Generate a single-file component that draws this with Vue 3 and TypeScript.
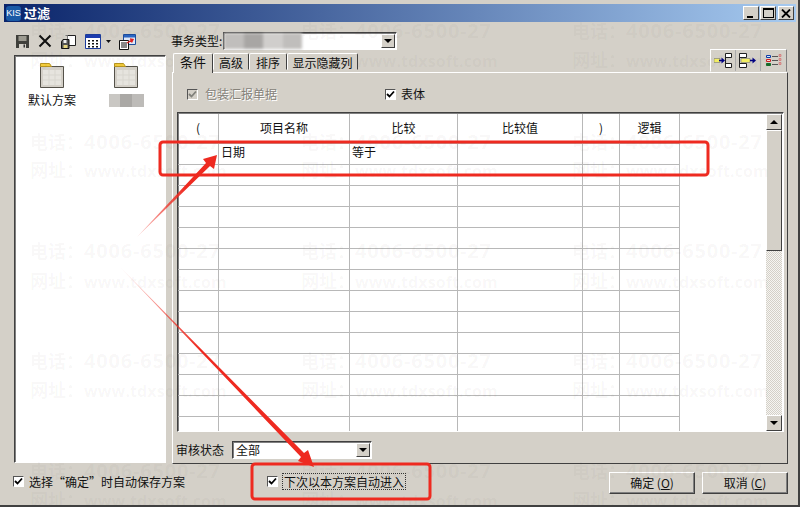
<script setup lang="ts">
const columns: string[] = ['(', '项目名称', '比较', '比较值', ')', '逻辑']
const rows: string[][] = Array.from({ length: 14 }, (_, i) =>
  i === 0 ? ['', '日期', '等于', '', '', ''] : ['', '', '', '', '', ''],
)
const tabs: string[] = ['条件', '高级', '排序', '显示隐藏列']
const marks = [
  { y: 19, l: '电话：', t: '4006-6500-27', url: false },
  { y: 48, l: '网址：', t: 'www.tdxsoft.com', url: true },
  { y: 130, l: '电话：', t: '4006-6500-27', url: false },
  { y: 158, l: '网址：', t: 'www.tdxsoft.com', url: true },
  { y: 239, l: '电话：', t: '4006-6500-27', url: false },
  { y: 269, l: '网址：', t: 'www.tdxsoft.com', url: true },
  { y: 349, l: '电话：', t: '4006-6500-27', url: false },
  { y: 378, l: '网址：', t: 'www.tdxsoft.com', url: true },
  { y: 459, l: '电话：', t: '4006-6500-27', url: false },
  { y: 488, l: '网址：', t: 'www.tdxsoft.com', url: true },
]
const markCols: number[] = [30, 301, 572]
</script>

<template>
  <div class="window">
    <header class="title">
      <span class="kis">KIS</span>
      <span class="title-text">过滤</span>
      <span class="win-btns">
        <button class="win-btn"><i class="g-min"></i></button>
        <button class="win-btn"><i class="g-max"></i></button>
        <button class="win-btn close">
          <svg width="10" height="9" viewBox="0 0 10 9"><path d="M1 0.5 9 8.500M9 0.5 1 8.500" stroke="#000" stroke-width="1.800" /></svg>
        </button>
      </span>
    </header>

    <div class="main">
      <aside class="side">
        <div class="toolbar">
          <svg width="15" height="15" viewBox="0 0 15 15"><path d="M1 1h13v13H1z" fill="#3f3f3a" /><path d="M3.500 2h8v5h-8z" fill="#9c9a90" /><path d="M4 10h7v4H4z" fill="#d4d0c8" /><path d="M8.500 10.500h1.500v3H8.500z" fill="#333" /></svg>
          <svg width="14" height="14" viewBox="0 0 14 14"><path d="M1.500 1.500 12.500 12.500M12.500 1.500 1.500 12.500" stroke="#111" stroke-width="2" /></svg>
          <svg width="17" height="16" viewBox="0 0 17 16"><path d="M7.500 1.500h8v10h-8z" fill="#fff" stroke="#222" /><path d="M5.500 1.500h2v4" fill="none" stroke="#777" /><path d="M3 5.500h6v9H1.500v-7z" fill="#555" stroke="#111" /><path d="M3.500 6h3v3h-3z" fill="#eee" /><path d="M3.500 11h4v3h-4z" fill="#e6d680" /></svg>
          <span class="grid-group">
            <svg width="16" height="15" viewBox="0 0 16 15"><path d="M.5.500h15v14H.5z" fill="#fff" stroke="#1c3c9c" /><path d="M1 1h14v3H1z" fill="#1c3cb0" /><path d="M3 6h2v1.500H3zM7 6h2v1.500H7zM11 6h2v1.500h-2zM3 9h2v1.500H3zM7 9h2v1.500H7zM11 9h2v1.500h-2zM3 12h2v1.500H3zM7 12h2v1.500H7zM11 12h2v1.500h-2z" fill="#111" /></svg>
            <svg width="5" height="3" viewBox="0 0 5 3"><path d="M0 0h5L2.500 3z" fill="#111" /></svg>
          </span>
          <svg width="17" height="16" viewBox="0 0 17 16"><path d="M4.500.500h12v10h-12z" fill="#dfe9f8" stroke="#1c4c9c" /><path d="M5 1h11v2.500H5z" fill="#2a66c4" /><path d="M.5 6.500h9v9h-9z" fill="#fff" stroke="#111" /><path d="M2 9h6M2 11h6M2 13h6" stroke="#111" /><path d="M8 9 13 6M11 5l3 .5L12.500 8.500" stroke="#d22" stroke-width="1.400" fill="none" /></svg>
        </div>
        <div class="list sunken">
          <figure class="scheme">
            <svg class="folder" width="24" height="25" viewBox="0 0 24 25"><path d="M.5 3.500h23v21H.5z" fill="#d4d0c8" stroke="#55524a" /><path d="M.5.500h9l2 3H.5z" fill="#f3cc3a" stroke="#b8951f" /><path d="M3 7h18v15H3z" fill="#e6e4de" /><path d="M3 12h18M3 17h18M9 7v15M15 7v15" stroke="#d8d6cf" /></svg>
            <figcaption>默认方案</figcaption>
          </figure>
          <figure class="scheme">
            <svg class="folder" width="24" height="25" viewBox="0 0 24 25"><path d="M.5 3.500h23v21H.5z" fill="#d4d0c8" stroke="#55524a" /><path d="M.5.500h9l2 3H.5z" fill="#f3cc3a" stroke="#b8951f" /><path d="M3 7h18v15H3z" fill="#e6e4de" /><path d="M3 12h18M3 17h18M9 7v15M15 7v15" stroke="#d8d6cf" /></svg>
            <figcaption class="blurred"><i></i><i></i><i></i></figcaption>
          </figure>
        </div>
      </aside>

      <section class="content">
        <div class="type-row">
          <label class="type-label">事务类型:</label>
          <div class="combo type-combo">
            <span class="smudge"><i></i><i></i><i></i><i></i></span>
            <span class="drop"><b></b></span>
          </div>
        </div>

        <div class="tab-row">
          <div class="tabs">
            <span v-for="(t, i) in tabs" :key="t" class="tab" :class="{ active: i === 0 }">{{ t }}</span>
          </div>
          <div class="tool-group">
            <span class="tool">
              <svg width="18" height="15" viewBox="0 0 18 15"><path d="M0 5.500h6v4H0z" fill="#f2ee62" stroke="#777" stroke-width=".6" /><path d="M5 7.500h4" stroke="#000080" stroke-width="1.500" /><path d="M7.500 4.500 11 7.500 7.500 10.500z" fill="#000080" /><path d="M11.500.5h6v4h-6zM11.500 10.500h6v4h-6zM11.500 4v7" fill="#fff" stroke="#222" /></svg>
            </span>
            <span class="tool">
              <svg width="18" height="15" viewBox="0 0 18 15"><path d="M.5.500h7v4h-7zM.5 10.500h7v4h-7zM.5 4v7" fill="#fff" stroke="#222" /><path d="M2 5.500h9v4H2z" fill="#f2ee62" stroke="#777" stroke-width=".6" /><path d="M11 7.500h3" stroke="#000080" stroke-width="1.500" /><path d="M13.500 4.500 17 7.500 13.500 10.500z" fill="#000080" /></svg>
            </span>
            <span class="tool">
              <svg width="16" height="13" viewBox="0 0 16 13"><path d="M.5 1.500h4v2h-4z" fill="#dfe6f8" stroke="#0b3da8" /><path d="M.5 5.500h4v2h-4z" fill="#f4d8d8" stroke="#c22" /><path d="M.5 9.500h4v2h-4z" fill="#176b2a" stroke="#176b2a" /><path d="M6 2.500h6M6 6.500h6M6 10.500h6" stroke="#555" /><path d="M13 .500h2v2h-2zM13 4.500h2v2h-2zM13 8.500h2v2h-2z" fill="#e4a8a8" stroke="#c66" stroke-width=".6" /></svg>
            </span>
          </div>
        </div>

        <div class="panel">
          <div class="check-row">
            <label class="check disabled"><span class="box"><svg width="9" height="9" viewBox="0 0 9 9"><path d="M1 4l2.500 2.500L8 1.500" stroke="#80807a" stroke-width="1.800" fill="none" /></svg></span>包装汇报单据</label>
            <label class="check"><span class="box white"><svg width="9" height="9" viewBox="0 0 9 9"><path d="M1 4l2.500 2.500L8 1.500" stroke="#000" stroke-width="1.800" fill="none" /></svg></span>表体</label>
          </div>

          <div class="table sunken">
            <div class="grid">
              <div class="head">
                <span v-for="(c, i) in columns" :key="i" class="cell head-cell">{{ c }}</span>
              </div>
              <div v-for="(r, i) in rows" :key="i" class="row">
                <span v-for="(v, j) in r" :key="j" class="cell">{{ v }}</span>
              </div>
            </div>
            <div class="scrollbar">
              <span class="sb-btn"><b class="up"></b></span>
              <span class="thumb"></span>
              <span class="track"></span>
              <span class="sb-btn"><b></b></span>
            </div>
          </div>

          <div class="audit-row">
            <label>审核状态</label>
            <div class="combo audit-combo">
              <span class="val">全部</span>
              <span class="drop"><b></b></span>
            </div>
          </div>
        </div>
      </section>
    </div>

    <footer class="foot">
      <label class="check save"><span class="box white"><svg width="9" height="9" viewBox="0 0 9 9"><path d="M1 4l2.500 2.500L8 1.500" stroke="#000" stroke-width="1.800" fill="none" /></svg></span>选择“确定”时自动保存方案</label>
      <label class="check auto"><span class="box white"><svg width="9" height="9" viewBox="0 0 9 9"><path d="M1 4l2.500 2.500L8 1.500" stroke="#000" stroke-width="1.800" fill="none" /></svg></span><em class="focus">下次以本方案自动进入</em></label>
      <button class="btn ok">确定 (<u>O</u>)</button>
      <button class="btn">取消 (<u>C</u>)</button>
    </footer>

    <div class="watermarks" aria-hidden="true">
      <template v-for="m in marks" :key="m.y">
        <span v-for="x in markCols" :key="x" class="mark" :class="{ url: m.url }" :style="{ left: x + 'px', top: m.y + 'px' }"><span class="mark-label">{{ m.l }}</span>{{ m.t }}</span>
      </template>
    </div>

    <svg class="annot" width="802" height="508" viewBox="0 0 802 508">
      <defs>
        <linearGradient id="fadeA" gradientUnits="userSpaceOnUse" x1="137" y1="237" x2="185" y2="187">
          <stop offset="0" stop-color="#ee2a20" stop-opacity=".25" />
          <stop offset="1" stop-color="#ee2a20" />
        </linearGradient>
        <linearGradient id="fadeB" gradientUnits="userSpaceOnUse" x1="120" y1="267" x2="200" y2="348">
          <stop offset="0" stop-color="#ee2a20" stop-opacity=".1" />
          <stop offset="1" stop-color="#ee2a20" />
        </linearGradient>
      </defs>
      <g fill="none" stroke="#ee2a20" stroke-width="3">
        <rect x="160" y="142" width="548" height="33" rx="3" />
        <rect x="252" y="464" width="178" height="35" rx="3" />
      </g>
      <path fill="url(#fadeA)" d="M137 237 L206 163 L203 159 L217 155 L214 169 L210 166Z" />
      <path fill="url(#fadeB)" d="M120 267 L304 453 L308 450 L314 467 L298 461 L301 457Z" />
    </svg>
  </div>
</template>

<style>
html, body { margin: 0; background: #fff; }
</style>

<style scoped>
.window {
  position: relative;
  width: 800px;
  height: 507px;
  box-sizing: border-box;
  background: #d4d0c8;
  border-right: 2px solid #404040;
  border-bottom: 2px solid #404040;
  padding: 4px 2px 0 4px;
  display: flex;
  flex-direction: column;
  overflow: hidden;
  font: 12px/14px "Noto Sans CJK SC", "Liberation Sans", sans-serif;
  color: #111;
}
.title {
  height: 18px;
  flex: none;
  display: flex;
  align-items: center;
  background: linear-gradient(90deg, #0a246a, #a6caf0);
  color: #fff;
}
.kis {
  width: 15px;
  height: 15px;
  margin-left: 2px;
  border-radius: 3px;
  background: #1a5aa6;
  font: 9px/15px "Liberation Sans", sans-serif;
  text-align: center;
}
.title-text { margin-left: 3px; font-weight: 700; font-size: 13px; }
.win-btns { margin-left: auto; display: flex; margin-right: 2px; }
.win-btn {
  width: 16px;
  height: 14px;
  padding: 0;
  margin-left: 1px;
  background: #d4d0c8;
  border: 1px solid;
  border-color: #fff #404040 #404040 #fff;
  display: flex;
  align-items: center;
  justify-content: center;
}
.close { margin-left: 2px; }
.g-min { width: 6px; height: 2px; background: #000; margin-top: 7px; margin-right: 3px; }
.g-max { width: 9px; height: 7px; border: 1px solid #000; border-top-width: 2px; }

.main { flex: none; display: flex; height: 442px; }
.side { width: 152px; margin-left: 10px; }
.toolbar {
  height: 33px;
  box-sizing: border-box;
  padding: 12px 0 0 1px;
  display: flex;
  align-items: flex-start;
  gap: 8px;
}
.grid-group { display: flex; align-items: center; gap: 5px; }
.sunken {
  box-sizing: border-box;
  border: 1px solid;
  border-color: #404040 #fff #fff #404040;
  box-shadow: inset 1px 1px 0 #808080;
}
.list {
  height: 408px;
  background: #fff;
  display: flex;
  padding: 7px 0 0 12px;
  gap: 24px;
  align-items: flex-start;
}
.scheme { margin: 0; display: flex; flex-direction: column; align-items: center; width: 50px; }
.scheme figcaption { margin-top: 5px; white-space: nowrap; }
.blurred { display: flex; height: 13px; margin-top: 6px !important; width: 35px; }
.blurred i { flex: 1; }
.blurred i:nth-child(1) { background: #c9c7c3; }
.blurred i:nth-child(2) { background: #aaa8a5; }
.blurred i:nth-child(3) { background: #bdbbb8; }

.content { width: 616px; margin-left: 6px; }
.type-row { height: 28px; box-sizing: border-box; padding-top: 10px; display: flex; align-items: flex-start; }
.type-label { margin-left: -1px; line-height: 18px; }
.combo {
  position: relative;
  box-sizing: border-box;
  background: #fff;
  border: 1px solid;
  border-color: #404040 #fff #fff #404040;
  box-shadow: inset 1px 1px 0 #808080;
  display: flex;
  align-items: center;
}
.type-combo { width: 174px; height: 18px; margin-left: 1px; }
.smudge { display: flex; height: 16px; width: 78px; filter: blur(1.500px); }
.smudge i { flex: 1; background: #c0bebc; }
.smudge i:nth-child(2) { background: #a8a6a4; }
.smudge i:nth-child(3) { background: #d0cecc; }
.drop {
  position: absolute;
  right: 1px;
  top: 1px;
  bottom: 1px;
  width: 14px;
  background: #d4d0c8;
  border: 1px solid;
  border-color: #fff #404040 #404040 #fff;
  box-sizing: border-box;
  display: flex;
  align-items: center;
  justify-content: center;
}
.drop b, .sb-btn b {
  width: 0;
  height: 0;
  border: 4px solid transparent;
  border-top-color: #000;
  border-bottom-width: 0;
}
.sb-btn b.up {
  border-top-width: 0;
  border-bottom: 4px solid #000;
}

.tab-row { height: 22px; display: flex; align-items: flex-end; justify-content: space-between; position: relative; z-index: 1; }
.tabs { display: flex; padding-left: 1px; }
.tab {
  height: 17px;
  box-sizing: border-box;
  padding: 2px 3px 0;
  text-align: center;
  border: 1px solid;
  border-color: #fff #404040 transparent #fff;
  border-radius: 2px 2px 0 0;
  white-space: nowrap;
  background: #d4d0c8;
}
.tab:nth-child(1) { width: 40px; }
.tab:nth-child(2) { width: 36px; }
.tab:nth-child(3) { width: 38px; }
.tab:nth-child(4) { width: 71px; }
.tab.active {
  height: 20px;
  margin-bottom: -1px;
  font-size: 13px;
  padding-top: 1px;
  border-bottom: 0;
}
.tool-group { display: flex; margin-right: 1px; border: 1px solid; border-color: #fff #808080 transparent #fff; }
.tool {
  width: 25px;
  height: 21px;
  display: flex;
  align-items: center;
  justify-content: center;
  box-sizing: border-box;
  border-right: 1px solid #aaa;
}
.tool:last-child { border-right: 0; }

.panel {
  height: 392px;
  box-sizing: border-box;
  border: 1px solid;
  border-color: #fff #404040 #404040 #fff;
  padding: 0 4px;
}
.check-row { height: 39px; box-sizing: border-box; padding-top: 14px; display: flex; align-items: flex-start; }
.check { display: inline-flex; align-items: center; white-space: nowrap; }
.disabled { color: #85827a; margin-left: 10px; width: 198px; text-shadow: 1px 1px 0 #fff; }
.box {
  width: 11px;
  height: 11px;
  flex: none;
  box-sizing: border-box;
  border: 1px solid;
  border-color: #555 #fff #fff #555;
  background: #d4d0c8;
  display: inline-flex;
  align-items: center;
  justify-content: center;
  margin-right: 7px;
}
.box.white { background: #fff; margin-right: 5px; }

.table {
  width: 607px;
  height: 320px;
  background: #fff;
  display: flex;
  overflow: hidden;
}
.grid { flex: 1; overflow: hidden; padding-top: 1px; }
.head, .row { display: flex; width: 502px; }
.cell {
  flex: none;
  box-sizing: border-box;
  height: 21px;
  border-right: 1px solid #b8b8b8;
  border-bottom: 1px solid #b8b8b8;
  padding: 1px 0 0 2px;
  white-space: nowrap;
}
.head-cell {
  height: 30px;
  padding: 7px 0 0;
  text-align: center;
}
.cell:nth-child(1) { width: 41px; }
.cell:nth-child(2) { width: 131px; }
.cell:nth-child(3) { width: 108px; }
.cell:nth-child(4) { width: 125px; }
.cell:nth-child(5) { width: 37px; }
.cell:nth-child(6) { width: 60px; }

.scrollbar { width: 16px; flex: none; display: flex; flex-direction: column; padding-top: 1px; margin-right: 1px; }
.sb-btn {
  height: 16px;
  flex: none;
  box-sizing: border-box;
  background: #d4d0c8;
  border: 1px solid;
  border-color: #fff #404040 #404040 #fff;
  display: flex;
  align-items: center;
  justify-content: center;
}
.thumb {
  height: 121px;
  flex: none;
  box-sizing: border-box;
  background: #d4d0c8;
  border: 1px solid;
  border-color: #fff #404040 #404040 #fff;
}
.track {
  flex: 1;
  background: repeating-conic-gradient(#d4d0c8 0 25%, #f6f5f2 0 50%) 0 0 / 2px 2px;
}

.audit-row { display: flex; align-items: center; height: 30px; padding-top: 5px; box-sizing: border-box; }
.audit-row label { width: 56px; margin-left: -1px; }
.audit-combo { width: 140px; height: 18px; }
.val { margin-left: 3px; }

.foot { flex: 1; display: flex; align-items: flex-start; padding: 8px 0 0 9px; }
.save { width: 254px; margin-top: 1px; height: 17px; }
.auto { width: 342px; margin-top: 1px; height: 17px; }
.focus { font-style: normal; outline: 1px dotted #333; padding: 0 1px; line-height: 15px; }
.btn {
  width: 86px;
  height: 22px;
  margin-right: 7px;
  padding: 0;
  background: #d4d0c8;
  border: 1px solid;
  border-color: #fff #404040 #404040 #fff;
  box-shadow: inset -1px -1px 0 #808080;
  font: inherit;
  color: #111;
}

.watermarks { position: absolute; inset: 0; pointer-events: none; }
.mark {
  position: absolute;
  font: 700 20px/24px "Open Sans", "Noto Sans CJK SC", sans-serif;
  letter-spacing: .8px;
  color: rgba(70, 60, 50, .045);
  white-space: nowrap;
}
.mark.url { font-size: 16px; letter-spacing: .1px; }
.mark-label { font-size: 18px; letter-spacing: 0; }
.annot { position: absolute; left: 0; top: 0; pointer-events: none; }
</style>
